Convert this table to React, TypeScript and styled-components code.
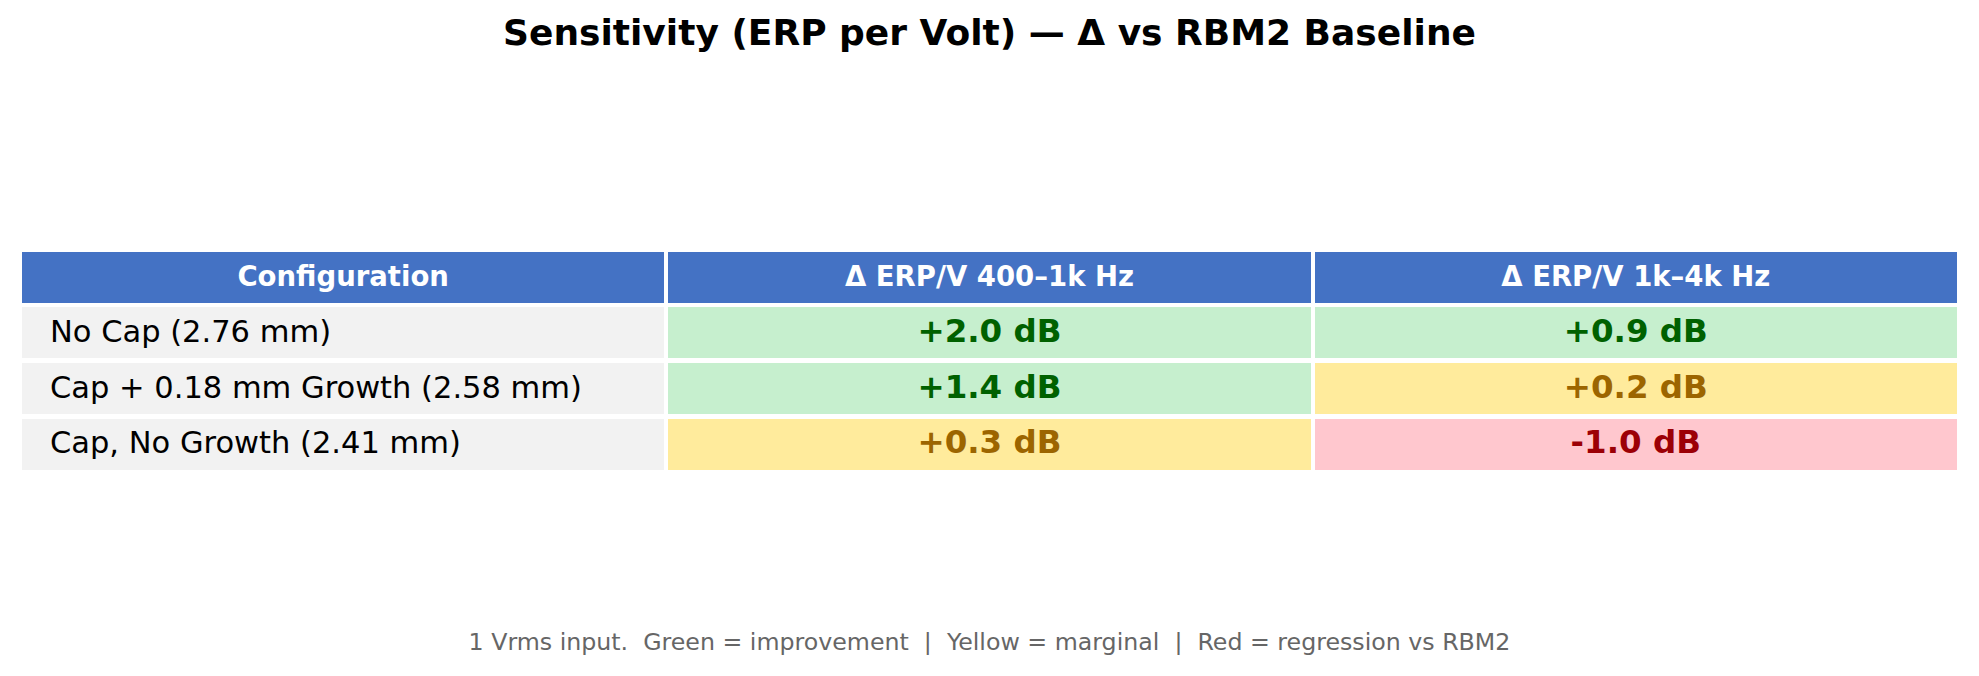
import React from 'react'
import styled, { createGlobalStyle } from 'styled-components'

const GlobalStyle = createGlobalStyle`
  html, body {
    margin: 0;
    padding: 0;
    background: #ffffff;
  }
  body {
    font-family: "DejaVu Sans", "Liberation Sans", sans-serif;
  }
`

type Tone = 'good' | 'meh' | 'bad'

const tones: Record<Tone, { bg: string; fg: string }> = {
  good: { bg: '#C6EFCE', fg: '#006100' },
  meh: { bg: '#FFEB9C', fg: '#9C6500' },
  bad: { bg: '#FFC7CE', fg: '#9C0006' },
}

const rows: { label: string; low: [string, Tone]; high: [string, Tone] }[] = [
  { label: 'No Cap (2.76 mm)', low: ['+2.0 dB', 'good'], high: ['+0.9 dB', 'good'] },
  { label: 'Cap + 0.18 mm Growth (2.58 mm)', low: ['+1.4 dB', 'good'], high: ['+0.2 dB', 'meh'] },
  { label: 'Cap, No Growth (2.41 mm)', low: ['+0.3 dB', 'meh'], high: ['-1.0 dB', 'bad'] },
]

const Page = () => (
  <Figure>
    <GlobalStyle />
    <Title>Sensitivity (ERP per Volt) — Δ vs RBM2 Baseline</Title>
    <Table>
      <HeadCell>Configuration</HeadCell>
      <HeadCell>Δ ERP/V 400–1k Hz</HeadCell>
      <HeadCell>Δ ERP/V 1k–4k Hz</HeadCell>
      {rows.map((r) => (
        <React.Fragment key={r.label}>
          <LabelCell>{r.label}</LabelCell>
          <ValueCell tone={r.low[1]}>{r.low[0]}</ValueCell>
          <ValueCell tone={r.high[1]}>{r.high[0]}</ValueCell>
        </React.Fragment>
      ))}
    </Table>
    <Footnote>
      {'1 Vrms input.  Green = improvement  |  Yellow = marginal  |  Red = regression vs RBM2'}
    </Footnote>
  </Figure>
)

const Figure = styled.div`
  width: 1979px;
  height: 676px;
  display: flex;
  flex-direction: column;
  align-items: center;
  background: #ffffff;
  overflow: hidden;
`

const Title = styled.div`
  margin-top: 12px;
  font-size: 36px;
  font-weight: bold;
  line-height: 1.164;
  color: #000000;
`

const Table = styled.div`
  margin-top: 198px;
  width: 1935px;
  display: grid;
  grid-template-columns: repeat(3, 1fr);
  grid-auto-rows: 51px;
  column-gap: 4px;
  row-gap: 4.6px;
`

const Cell = styled.div`
  display: flex;
  align-items: center;
  padding-bottom: 2px;
  box-sizing: border-box;
  line-height: 1.164;
  white-space: nowrap;
`

const HeadCell = styled(Cell)`
  justify-content: center;
  background: #4472C4;
  color: #ffffff;
  font-size: 27.5px;
  font-weight: bold;
`

const LabelCell = styled(Cell)`
  padding-left: 28px;
  background: #F2F2F2;
  color: #000000;
  font-size: 30.5px;
`

const ValueCell = styled(Cell)<{ tone: Tone }>`
  justify-content: center;
  background: ${(p) => tones[p.tone].bg};
  color: ${(p) => tones[p.tone].fg};
  font-size: 32.5px;
  font-weight: bold;
`

const Footnote = styled.div`
  margin-top: 159px;
  font-size: 23.7px;
  line-height: 1.164;
  color: #666666;
  white-space: pre;
`

export default Page
